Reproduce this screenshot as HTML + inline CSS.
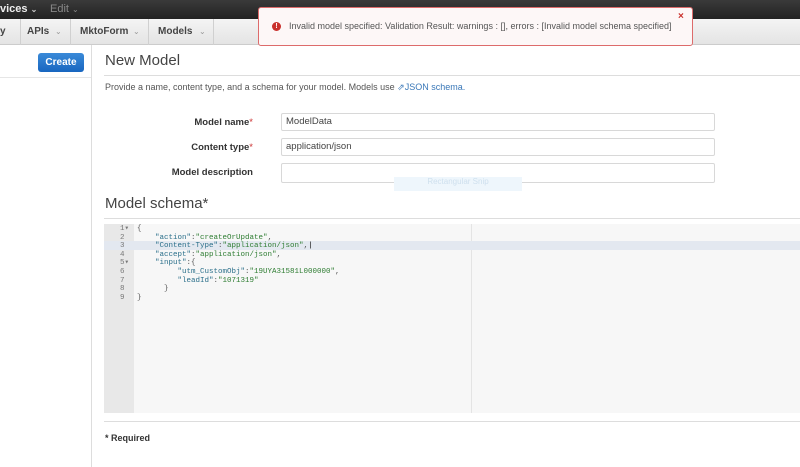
<!DOCTYPE html>
<html><head><style>
*{margin:0;padding:0;box-sizing:border-box}
body{width:800px;height:467px;overflow:hidden;background:#fff;font-family:"Liberation Sans",Arial,sans-serif;position:relative;color:#333}
.a{position:absolute}
.top{left:0;top:0;width:800px;height:19px;background:linear-gradient(#3a3a3a,#222)}
.nav{left:0;top:19px;width:800px;height:26px;background:linear-gradient(#f4f4f4,#e4e4e4);border-bottom:1px solid #ccc}
.nav span{position:absolute;top:7px;font-size:10px;font-weight:bold;color:#444}
.sep{position:absolute;top:0;width:1px;height:26px;background:#d0d0d0}
.car{color:#999!important;font-weight:normal!important;font-size:8px!important;top:8px!important}
.btn{left:38px;top:53px;width:46px;height:19px;background:linear-gradient(#3a8ad8,#1866c0);border-radius:3px;color:#fff;font-size:10px;font-weight:bold;text-align:center;line-height:19px}
.lbl{font-size:9.5px;font-weight:bold;color:#333;text-align:right;width:170px;left:83px}
.lbl i{color:#c33;font-style:normal;font-weight:normal}
.inp{left:281px;width:434px;border:1px solid #d8d8d8;border-radius:2px;font-size:9.5px;padding-left:4px;color:#444}
.code{font-family:"Liberation Mono",monospace;font-size:7.5px;line-height:8.6px;color:#555}
</style></head><body>
<div class="a top"></div>
<div class="a" style="left:0;top:3px;font-size:11px;font-weight:bold;color:#eee">vices <span style="font-size:8px;color:#ccc">⌄</span></div>
<div class="a" style="left:50px;top:3px;font-size:11px;color:#888">Edit <span style="font-size:8px">⌄</span></div>
<div class="a nav">
<span style="left:0">y</span><div class="sep" style="left:20px"></div>
<span style="left:27px">APIs</span><span class="car" style="left:55px">⌄</span><div class="sep" style="left:70px"></div>
<span style="left:80px">MktoForm</span><span class="car" style="left:133px">⌄</span><div class="sep" style="left:148px"></div>
<span style="left:158px">Models</span><span class="car" style="left:199px">⌄</span><div class="sep" style="left:213px"></div>
</div>
<div class="a" style="left:91px;top:45px;width:1px;height:422px;background:#ddd"></div>
<div class="a" style="left:0;top:77px;width:91px;height:1px;background:#e6e6e6"></div>
<div class="a btn">Create</div>
<div class="a" style="left:105px;top:52px;font-size:15px;color:#444">New Model</div>
<div class="a" style="left:104px;top:75px;width:696px;height:1px;background:#ddd"></div>
<div class="a" style="left:105px;top:82px;font-size:9px;color:#555">Provide a name, content type, and a schema for your model. Models use <span style="color:#3a78b8">⇗JSON schema.</span></div>
<div class="a lbl" style="top:117px">Model name<i>*</i></div>
<div class="a inp" style="top:113px;height:18px;line-height:16px">ModelData</div>
<div class="a lbl" style="top:142px">Content type<i>*</i></div>
<div class="a inp" style="top:138px;height:18px;line-height:16px">application/json</div>
<div class="a lbl" style="top:167px">Model description</div>
<div class="a inp" style="top:163px;height:20px"></div>
<div class="a" style="left:394px;top:177px;width:128px;height:14px;background:#eef6fc;color:#cfe0ee;font-size:8px;text-align:center">Rectangular Snip</div>
<div class="a" style="left:105px;top:195px;font-size:15px;color:#444">Model schema*</div>
<div class="a" style="left:104px;top:218px;width:696px;height:1px;background:#ddd"></div>
<div class="a" style="left:104px;top:224px;width:696px;height:189px;background:#f7f7f7"></div>
<div class="a" style="left:104px;top:224px;width:30px;height:189px;background:#e8e8e8"></div>
<div class="a" style="left:471px;top:224px;width:1px;height:189px;background:#e4e4e4"></div>
<div class="a" style="left:104px;top:241px;width:696px;height:9px;background:#e3e8f0"></div>
<div class="a code" style="left:120px;top:225px;color:#777">1▾<br>2<br>3<br>4<br>5▾<br>6<br>7<br>8<br>9</div>
<div class="a code" style="left:137px;top:225px;white-space:pre">{
    <span style="color:#2a6f8a">"action"</span>:<span style="color:#2e7d32">"createOrUpdate"</span>,
    <span style="color:#2a6f8a">"Content-Type"</span>:<span style="color:#2e7d32">"application/json"</span>,<span style="color:#000">|</span>
    <span style="color:#2a6f8a">"accept"</span>:<span style="color:#2e7d32">"application/json"</span>,
    <span style="color:#2a6f8a">"input"</span>:{
         <span style="color:#2a6f8a">"utm_CustomObj"</span>:<span style="color:#2e7d32">"19UYA31581L000000"</span>,
         <span style="color:#2a6f8a">"leadId"</span>:<span style="color:#2e7d32">"1071319"</span>
      }
}</div>
<div class="a" style="left:104px;top:421px;width:696px;height:1px;background:#ddd"></div>
<div class="a" style="left:105px;top:433px;font-size:9px;font-weight:bold;color:#333">* Required</div>
<div class="a" style="left:258px;top:7px;width:435px;height:39px;background:#fdf7f7;border:1px solid #dd6b6b;border-radius:3px"></div>
<div class="a" style="left:272px;top:22px;width:9px;height:9px;border-radius:50%;background:#c9302c;color:#fff;font-size:7px;font-weight:bold;text-align:center;line-height:9px">!</div>
<div class="a" style="left:289px;top:21px;font-size:9px;color:#555;white-space:nowrap">Invalid model specified: Validation Result: warnings : [], errors : [Invalid model schema specified]</div>
<div class="a" style="left:678px;top:11px;font-size:10px;font-weight:bold;color:#c9302c">×</div>
</body></html>
